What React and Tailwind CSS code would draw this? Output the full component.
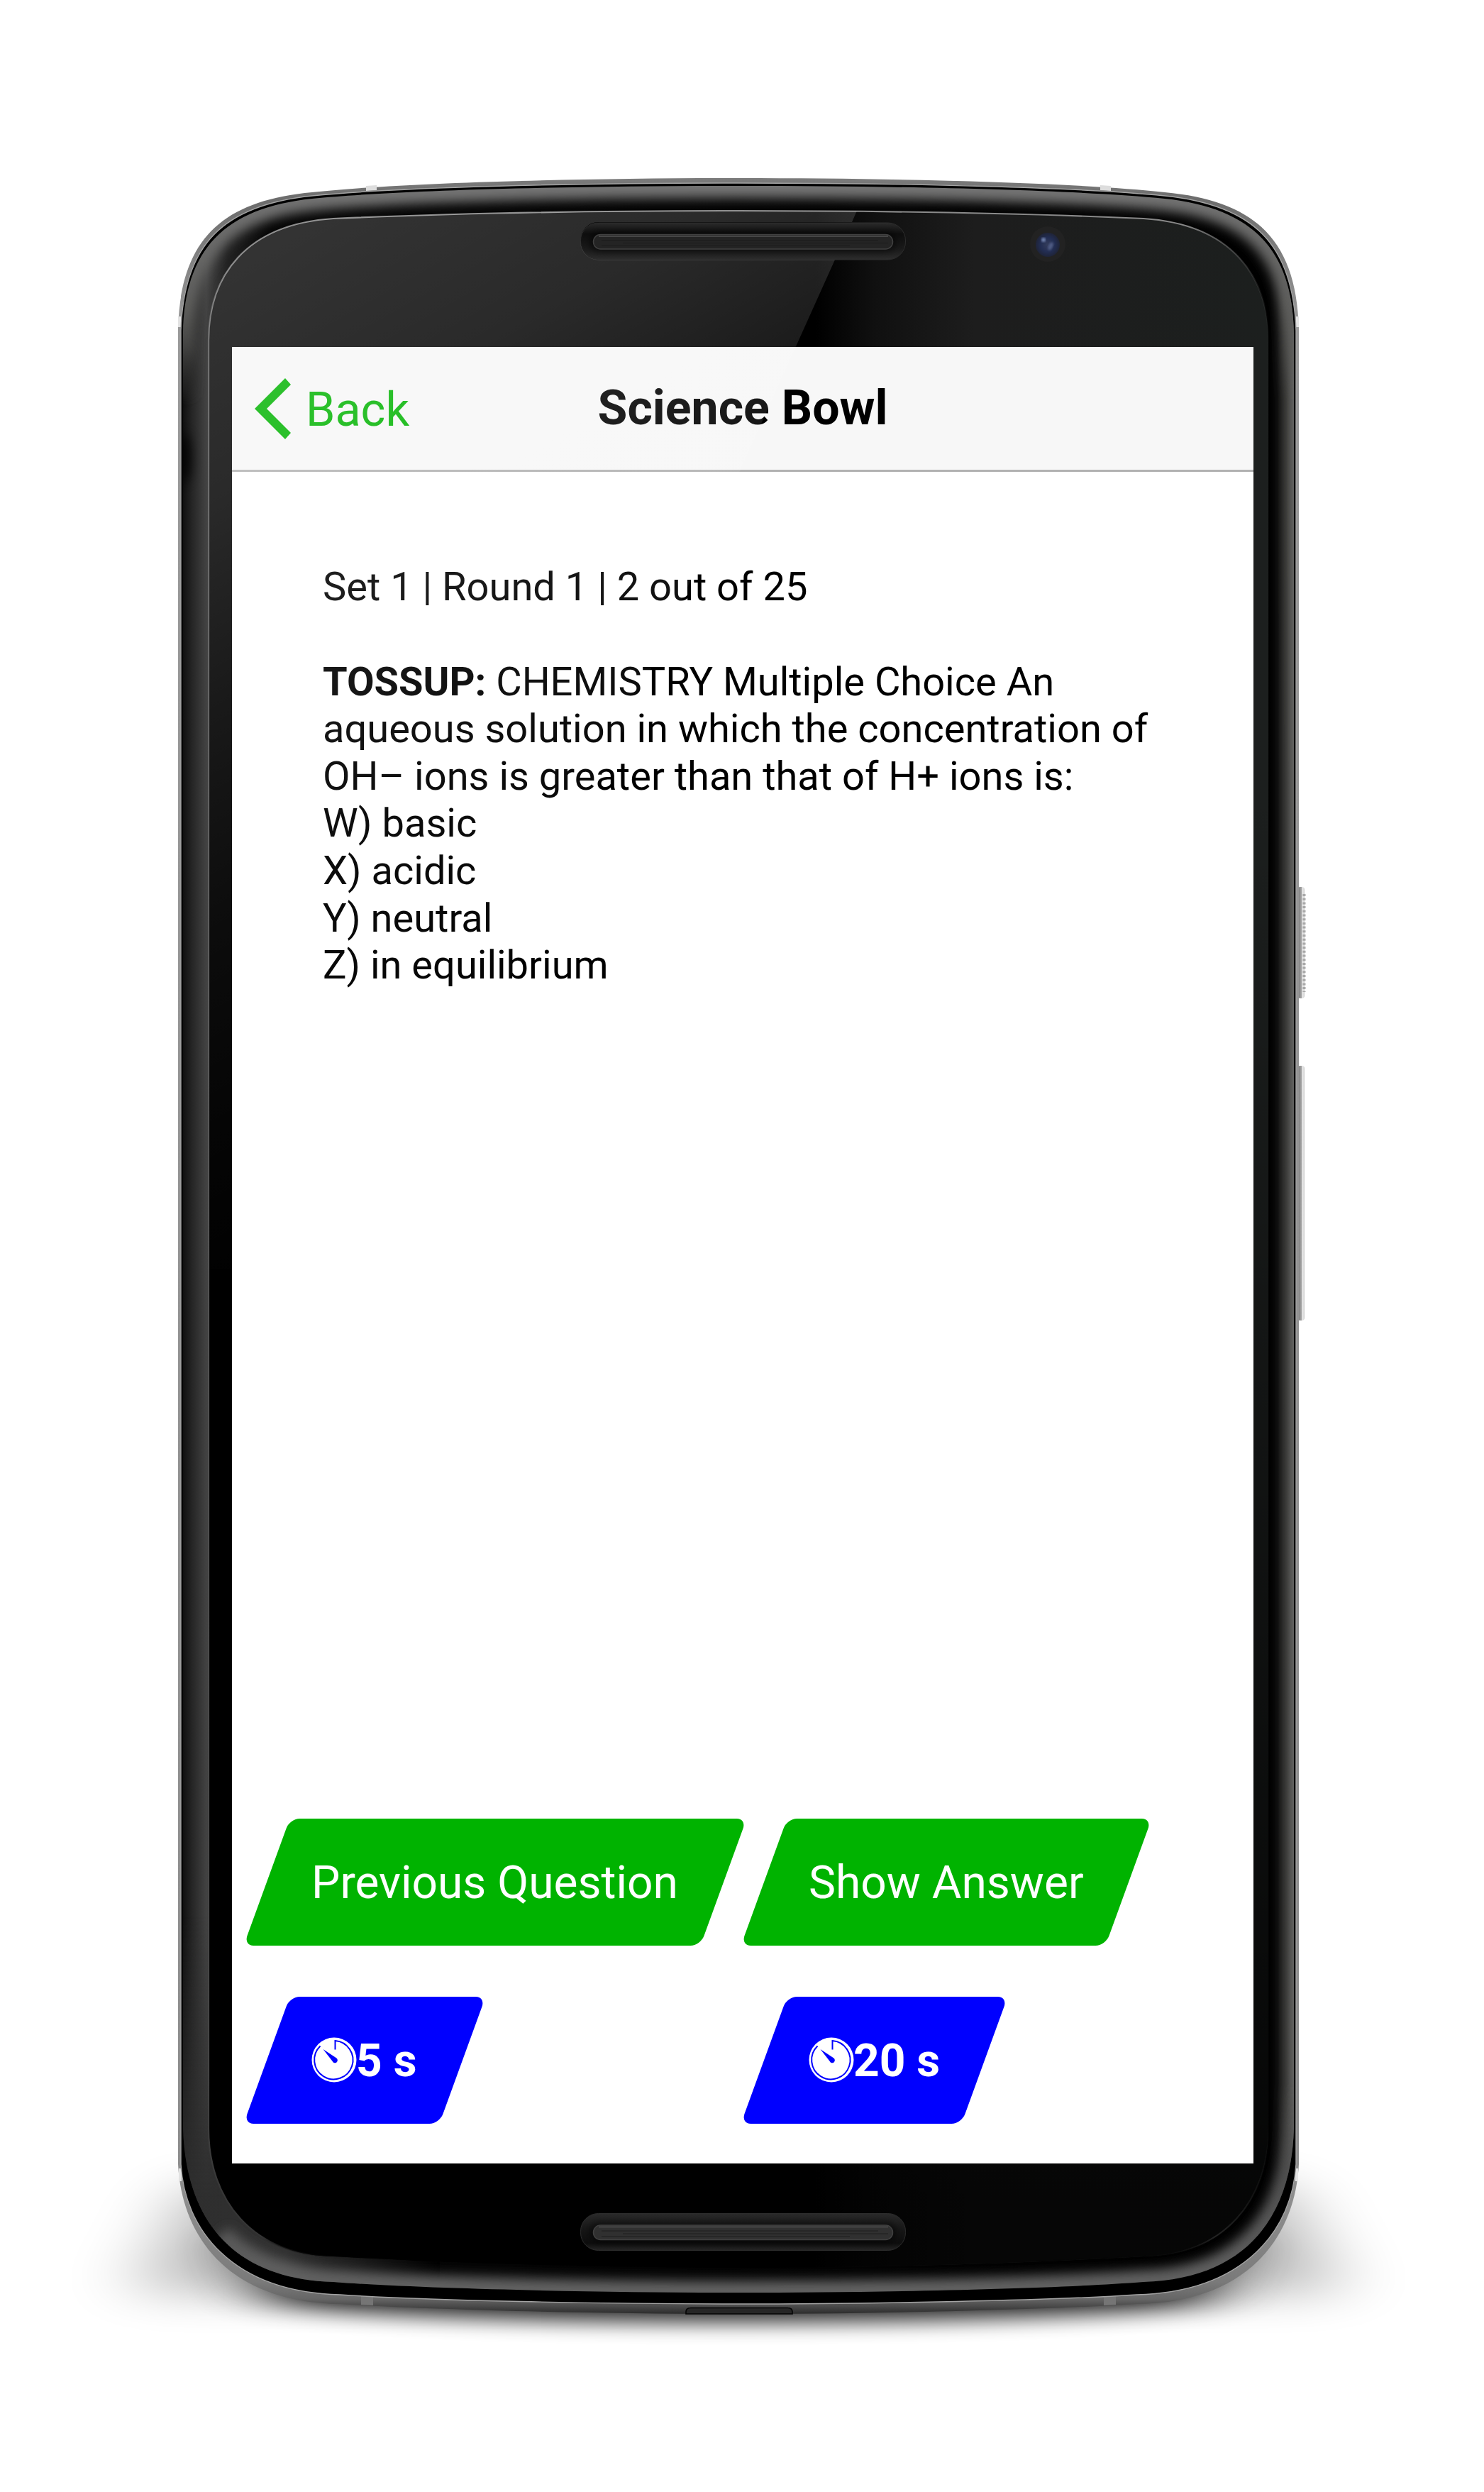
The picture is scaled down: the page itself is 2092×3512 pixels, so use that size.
const OUTER = "M251 462 C255 340 310 283 440 271 C560 258 800 251 1041 251 C1282 251 1522 258 1642 271 C1772 283 1827 340 1831 462 L1831 3050 C1826 3150 1762 3245 1602 3247 C1482 3255 1232 3261 1041 3261 C850 3261 600 3255 480 3247 C320 3245 256 3150 251 3050 Z";
const RING = "M255 466 C259 345 314 289 440 276 C560 264 800 258 1041 258 C1282 258 1522 264 1642 276 C1768 289 1823 345 1827 466 L1827 3050 C1822 3140 1757 3230 1602 3234 C1482 3242 1232 3247 1041 3247 C850 3247 600 3242 480 3234 C325 3230 260 3140 255 3050 Z";
const BEVEL = "M258 470 C260 352 316 293 440 280 C560 268 800 262 1041 262 C1282 262 1522 268 1642 280 C1766 293 1822 352 1824 470 L1824 3000 C1820 3130 1752 3212 1612 3216 C1482 3226 1232 3231 1041 3231 C850 3231 600 3226 470 3216 C330 3212 262 3130 258 3000 Z";
const FACE = "M294 480 C294 390 345 316 470 308 C650 300 850 297 1041 297 C1232 297 1432 300 1612 308 C1737 316 1788 390 1788 480 L1788 3000 C1788 3100 1727 3178 1612 3180 C1432 3190 1232 3196 1041 3196 C850 3196 650 3190 470 3180 C355 3178 294 3100 294 3000 Z";
const GLOW = "M258 560 L258 470 C260 352 316 293 440 280 C560 268 800 262 1041 262 C1282 262 1522 268 1642 280 C1766 293 1822 352 1824 470 L1824 3000 C1820 3130 1752 3212 1612 3216 C1482 3226 1232 3231 1041 3231 C850 3231 600 3226 470 3216 C400 3212 340 3185 310 3150";

function Stop({ at, c, o = 1 }) {
  return <stop offset={at} stopColor={c} stopOpacity={o} />;
}

function Speaker({ y, base, bar }) {
  return (
    <g transform={`translate(818 ${y})`}>
      <rect x="0.5" y="0.5" width="458" height="52" rx="25" fill={base} stroke="#2c2c2c" />
      <rect x="12" y="12" width="434" height="30" rx="15" fill="#000" opacity="0.45" filter="url(#soft4)" />
      <rect x="18.5" y="17" width="422" height="20.5" rx="10" fill={bar} stroke="#404040" strokeWidth="1.5" />
      <path d="M26 19.5H434" stroke="#505050" strokeWidth="1.5" />
      <path d="M30 25H420M60 29H434M30 33H380" stroke="#191919" strokeWidth="0.8" />
    </g>
  );
}

function PhoneBody() {
  return (
    <svg className="absolute inset-0" width="2092" height="3512" viewBox="0 0 2092 3512" aria-hidden="true">
      <defs>
        <linearGradient id="metal" x1="0" y1="251" x2="0" y2="3261" gradientUnits="userSpaceOnUse">
          <Stop at="0" c="#7b7b7b" /><Stop at="0.01" c="#6c6c6c" /><Stop at="0.07" c="#9a9a9a" />
          <Stop at="0.95" c="#8d8d8d" /><Stop at="0.985" c="#7a7a7a" /><Stop at="0.993" c="#666" /><Stop at="1" c="#2c2c2c" />
        </linearGradient>
        <linearGradient id="bevel" x1="258" y1="0" x2="1824" y2="0" gradientUnits="userSpaceOnUse">
          <Stop at="0" c="#101010" /><Stop at="0.008" c="#252525" /><Stop at="0.021" c="#424242" />
          <Stop at="0.04" c="#222" /><Stop at="0.08" c="#050505" /><Stop at="0.978" c="#000" />
          <Stop at="0.985" c="#0b0b0b" /><Stop at="0.993" c="#353533" /><Stop at="1" c="#666664" />
        </linearGradient>
        <linearGradient id="bevelCorner" x1="258" y1="0" x2="620" y2="0" gradientUnits="userSpaceOnUse">
          <Stop at="0" c="#2e2e2e" /><Stop at="0.4" c="#303030" /><Stop at="0.65" c="#1d1d1d" /><Stop at="1" c="#000" />
        </linearGradient>
        <linearGradient id="cornerFade" x1="0" y1="2700" x2="0" y2="3100" gradientUnits="userSpaceOnUse">
          <Stop at="0" c="#fff" o="0" /><Stop at="1" c="#fff" />
        </linearGradient>
        <mask id="cornerMask" maskUnits="userSpaceOnUse" x="200" y="2700" width="440" height="600">
          <rect x="200" y="2700" width="440" height="600" fill="url(#cornerFade)" />
        </mask>
        <linearGradient id="glow" x1="0" y1="262" x2="0" y2="3231" gradientUnits="userSpaceOnUse">
          <Stop at="0" c="#747474" /><Stop at="0.06" c="#5c5c5a" /><Stop at="0.1" c="#5c5c5a" o="0.2" />
          <Stop at="0.9" c="#555" o="0.2" /><Stop at="0.95" c="#505050" /><Stop at="1" c="#626262" />
        </linearGradient>
        <linearGradient id="face" x1="1150" y1="0" x2="1788" y2="0" gradientUnits="userSpaceOnUse">
          <Stop at="0" c="#000" /><Stop at="0.13" c="#101010" /><Stop at="0.35" c="#1d1d1d" /><Stop at="1" c="#1c1f1e" />
        </linearGradient>
        <linearGradient id="faceFade" x1="0" y1="1100" x2="0" y2="3100" gradientUnits="userSpaceOnUse">
          <Stop at="0" c="#000" o="0" /><Stop at="1" c="#000" o="0.8" />
        </linearGradient>
        <linearGradient id="rim" x1="0" y1="297" x2="0" y2="3196" gradientUnits="userSpaceOnUse">
          <Stop at="0" c="#8b8b8b" /><Stop at="0.06" c="#656565" /><Stop at="0.9" c="#444" /><Stop at="0.985" c="#333" /><Stop at="0.997" c="#000" o="0" />
        </linearGradient>
        <linearGradient id="rimSide" x1="290" y1="0" x2="1790" y2="0" gradientUnits="userSpaceOnUse">
          <Stop at="0" c="#fff" /><Stop at="0.92" c="#fff" /><Stop at="0.995" c="#222" /><Stop at="1" c="#000" />
        </linearGradient>
        <mask id="rimMask" maskUnits="userSpaceOnUse" x="0" y="0" width="2092" height="3512">
          <rect width="2092" height="3512" fill="url(#rimSide)" />
        </mask>
        <linearGradient id="slotTop" x1="0" y1="0" x2="0" y2="1"><Stop at="0" c="#2b2b2b" /><Stop at="0.3" c="#0e0e0e" /><Stop at="0.7" c="#1a1a1a" /><Stop at="1" c="#2d2d2d" /></linearGradient>
        <linearGradient id="slotBottom" x1="0" y1="0" x2="0" y2="1"><Stop at="0" c="#2a2a2a" /><Stop at="0.4" c="#181818" /><Stop at="0.8" c="#0d0d0d" /><Stop at="1" c="#262626" /></linearGradient>
        <linearGradient id="btn" x1="0" y1="0" x2="1" y2="0"><Stop at="0" c="#707070" /><Stop at="0.55" c="#a5a5a5" /><Stop at="0.75" c="#eee" /><Stop at="1" c="#c4c4c4" /></linearGradient>
        <radialGradient id="lens"><Stop at="0" c="#343d5c" /><Stop at="0.6" c="#222d52" /><Stop at="1" c="#1f2438" /></radialGradient>
        <filter id="soft4" x="-10%" y="-60%" width="120%" height="220%"><feGaussianBlur stdDeviation="4" /></filter>
        <filter id="soft1"><feGaussianBlur stdDeviation="1.5" /></filter>
        <filter id="soft10" filterUnits="userSpaceOnUse" x="200" y="200" width="1700" height="3120"><feGaussianBlur stdDeviation="8" /></filter>
        <filter id="shadowA" filterUnits="userSpaceOnUse" x="0" y="2800" width="2092" height="712"><feGaussianBlur stdDeviation="55 28" /></filter>
        <filter id="shadowB" filterUnits="userSpaceOnUse" x="0" y="2900" width="2092" height="612"><feGaussianBlur stdDeviation="50 15" /></filter>
        <clipPath id="bevelClip"><path d={BEVEL} /></clipPath>
        <clipPath id="faceClip"><path d={FACE} /></clipPath>
      </defs>

      <path d="M272 3080 H1810 L1890 3232 H192 Z" fill="#000" opacity="0.27" filter="url(#shadowA)" />
      <path d="M350 3150 H1732 L1700 3248 C1400 3280 682 3280 382 3248 Z" fill="#000" opacity="0.85" filter="url(#shadowB)" />

      <g>
        <rect x="1829" y="1250" width="10" height="157" rx="4" fill="url(#btn)" />
        <path d="M1838.5 1260V1398" stroke="#a8a8a8" strokeWidth="4" strokeDasharray="3 2.7" />
        <rect x="1829" y="1502" width="10" height="359" rx="4" fill="url(#btn)" />
      </g>

      <path d={OUTER} fill="url(#metal)" />
      <path d="M516 262L531 261L531 268L516 269ZM1566 269L1551 268L1551 261L1566 262Z" fill="#ddd" />
      <path d="M251 446H255V461H251ZM1827 446H1831V461H1827ZM252 3056H256V3074H252ZM1826 3056H1830V3074H1826Z" fill="#e3e3e3" />
      <path d="M509 3236L526 3237V3249L509 3248ZM1573 3236L1556 3237V3249L1573 3248Z" fill="#757575" />
      <path d={RING} fill="#000" stroke="#a3a3a3" strokeWidth="1.4" />
      <path d="M967 3261V3258C967 3254 969 3252.500 974 3252.500H1110C1115 3252.500 1117 3254 1117 3258V3261Z" fill="#262626" stroke="#050505" strokeWidth="1.6" />

      <path d={BEVEL} fill="url(#bevel)" />
      <g clipPath="url(#bevelClip)">
        <rect x="258" y="2700" width="362" height="540" fill="url(#bevelCorner)" mask="url(#cornerMask)" />
        <ellipse cx="259" cy="525" rx="10" ry="35" fill="#000" opacity="0.8" filter="url(#soft10)" />
        <ellipse cx="259" cy="645" rx="10" ry="35" fill="#000" opacity="0.8" filter="url(#soft10)" />
        <path d={GLOW} fill="none" stroke="url(#glow)" strokeWidth="34" filter="url(#soft10)" />
      </g>
      <path d={FACE} fill="url(#face)" />
      <path d={FACE} fill="url(#faceFade)" />
      <path d={FACE} fill="none" stroke="url(#rim)" strokeWidth="2.200" mask="url(#rimMask)" />

      <Speaker y={313.5} base="url(#slotTop)" bar="#242424" />
      <Speaker y={3119} base="url(#slotBottom)" bar="#303030" />

      <ellipse cx="1477" cy="344" rx="25" ry="25" fill="#222" />
      <circle cx="1477" cy="345" r="17" fill="url(#lens)" />
      <circle cx="1471" cy="338" r="3" fill="#7385b0" filter="url(#soft1)" />
      <ellipse cx="1481" cy="347" rx="3" ry="6" fill="#4f5b85" transform="rotate(25 1481 347)" filter="url(#soft1)" />
    </svg>
  );
}

function Glare() {
  return (
    <svg className="pointer-events-none absolute inset-0" width="2092" height="3512" viewBox="0 0 2092 3512" aria-hidden="true">
      <defs>
        <linearGradient id="glare" x1="300" y1="400" x2="940" y2="1531" gradientUnits="userSpaceOnUse">
          <Stop at="0" c="#fff" o="0.2" /><Stop at="0.2" c="#fff" o="0.165" /><Stop at="0.4" c="#fff" o="0.1" />
          <Stop at="0.6" c="#fff" o="0.05" /><Stop at="0.8" c="#fff" o="0.02" /><Stop at="1" c="#fff" o="0" />
        </linearGradient>
      </defs>
      <g clipPath="url(#faceClip)">
        <path
          d="M290 290H1211L1201 313H843A25 26.500 0 0 0 843 366H1177L537 1788H290Z"
          fill="url(#glare)"
        />
      </g>
    </svg>
  );
}

function Timer() {
  return (
    <svg className="relative -top-[2px] -mr-[1px] h-16 w-16 shrink-0" viewBox="0 0 64 64" aria-hidden="true">
      <circle cx="32" cy="32" r="31.500" fill="#fff" />
      <path d="M33.500 17.500V5A27.200 27.200 0 1 1 12.500 12.500" fill="none" stroke="#00f" strokeWidth="2" />
      <path d="M16.500 17L35 29.200A3.800 3.800 0 1 1 29.500 33.800Z" fill="#00f" />
    </svg>
  );
}

function SkewButton({ className, children }) {
  return (
    <button className={`relative flex h-[179px] items-center pt-[2px] pl-[63px] whitespace-nowrap text-[64px] leading-none text-white ${className}`}>
      {children}
    </button>
  );
}

const OPTIONS = ["W) basic", "X) acidic", "Y) neutral", "Z) in equilibrium"];

export default function App() {
  return (
    <div className="relative h-[3512px] w-[2092px] overflow-hidden bg-white font-[Roboto,sans-serif] text-black">
      <PhoneBody />
      <div className="relative pt-[489px] pl-[327px]">
        <div className="flex h-[2560px] w-[1440px] flex-col bg-white">
          <header className="grid h-[176px] shrink-0 grid-cols-[1fr_auto_1fr] items-center border-b-[3px] border-[#b2b2b2] bg-[#f7f7f7]">
            <div className="flex items-center pl-[32px] text-[#00b300]">
              <svg width="51" height="86" viewBox="0 0 51 86" aria-hidden="true">
                <path d="M43 0L51 9L17 43L51 77L43 86L0 43Z" fill="currentColor" />
              </svg>
              <span className="pt-[4px] pl-[21px] text-[66.500px] leading-none">Back</span>
            </div>
            <h1 className="pb-[2px] text-[68px] leading-none font-bold">Science Bowl</h1>
            <span />
          </header>

          <main className="flex grow flex-col px-[128px] pt-[129px] text-[56px] leading-[66.600px]">
            <p>Set 1 | Round 1 | 2 out of 25</p>
            <p className="mt-[67px] whitespace-nowrap">
              <b>TOSSUP:</b> CHEMISTRY Multiple Choice An<br />
              aqueous solution in which the concentration of<br />
              OH– ions is greater than that of H+ ions is:
            </p>
            {OPTIONS.map((option) => (
              <p key={option}>{option}</p>
            ))}
          </main>

          <footer className="grid grid-cols-[701px_auto] justify-start gap-y-[72px] pb-[56px] pl-[49px]">
            <SkewButton className="w-[644px]">
              <span className="absolute inset-0 -skew-x-20 rounded-[14px] bg-[#00b300]" />
              <span className="relative">Previous Question</span>
            </SkewButton>
            <SkewButton className="w-[514px]">
              <span className="absolute inset-0 -skew-x-20 rounded-[14px] bg-[#00b300]" />
              <span className="relative">Show Answer</span>
            </SkewButton>
            <SkewButton className="w-[276px] font-bold">
              <span className="absolute inset-0 -skew-x-20 rounded-[14px] bg-[#0000ff]" />
              <span className="relative flex items-center"><Timer />5 s</span>
            </SkewButton>
            <SkewButton className="w-[311px] font-bold">
              <span className="absolute inset-0 -skew-x-20 rounded-[14px] bg-[#0000ff]" />
              <span className="relative flex items-center"><Timer />20 s</span>
            </SkewButton>
          </footer>
        </div>
      </div>
      <Glare />
    </div>
  );
}
